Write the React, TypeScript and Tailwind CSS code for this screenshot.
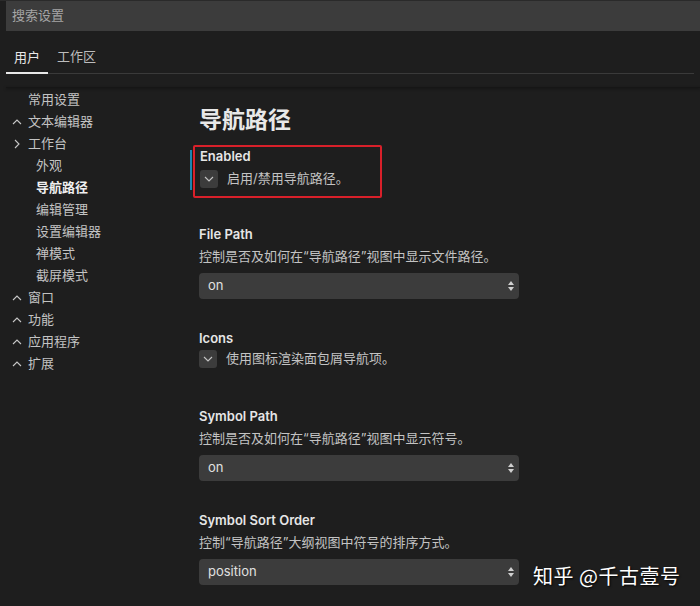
const font = { fontFamily: '"Inter", "Noto Sans CJK SC", sans-serif' }

const sidebar = [
  { label: '常用设置', indent: 'pl-[28px]' },
  { label: '文本编辑器', chevron: 'up' },
  { label: '工作台', chevron: 'right' },
  { label: '外观', indent: 'pl-[36px]' },
  { label: '导航路径', indent: 'pl-[36px]', active: true },
  { label: '编辑管理', indent: 'pl-[36px]' },
  { label: '设置编辑器', indent: 'pl-[36px]' },
  { label: '禅模式', indent: 'pl-[36px]' },
  { label: '截屏模式', indent: 'pl-[36px]' },
  { label: '窗口', chevron: 'up' },
  { label: '功能', chevron: 'up' },
  { label: '应用程序', chevron: 'up' },
  { label: '扩展', chevron: 'up' },
]

function Chevron({ dir }: { dir: string }) {
  return (
    <svg width="10" height="10" viewBox="0 0 10 10" className="ml-[2px] mr-[6px] shrink-0">
      {dir === 'up' ? (
        <path d="M1 7 L5 3 L9 7" fill="none" stroke="#c8c8c8" strokeWidth="1.1" />
      ) : (
        <path d="M3 1 L7 5 L3 9" fill="none" stroke="#c8c8c8" strokeWidth="1.1" />
      )}
    </svg>
  )
}

function Checkbox() {
  return (
    <div className="w-[18px] h-[18px] rounded-[3px] bg-[#3c3c3c] flex items-center justify-center shrink-0">
      <svg width="10" height="6" viewBox="0 0 10 6">
        <path d="M1 1 L5 5 L9 1" fill="none" stroke="#c5c5c5" strokeWidth="1.1" />
      </svg>
    </div>
  )
}

function Select({ value }: { value: string }) {
  return (
    <div className="w-[320px] h-[26px] rounded-[4px] bg-[#3c3c3c] flex items-center justify-between pl-[9px] pr-[4px] text-[13px] text-[#e0e0e0]">
      <span>{value}</span>
      <svg width="8" height="14" viewBox="0 0 8 14">
        <path d="M4 2 L7 6 L1 6 Z" fill="#d0d0d0" />
        <path d="M4 12 L7 8 L1 8 Z" fill="#d0d0d0" />
      </svg>
    </div>
  )
}

function Setting({ title, desc, value, mt }: { title: string; desc: string; value: string; mt: string }) {
  return (
    <div className={mt}>
      <div className="text-[13px] font-semibold text-[#e6e6e6] leading-[18px]">{title}</div>
      <div className="mt-[2px] text-[13px] text-[#c3c3c3] leading-[22px] mb-[6px]">{desc}</div>
      <Select value={value} />
    </div>
  )
}

export default function App() {
  return (
    <div className="w-[700px] h-[606px] bg-[#1e1e1e] overflow-hidden relative" style={font}>
      <div className="h-px bg-[#2a2a2a]" />
      {/* search */}
      <div className="ml-[6px] h-[30px] bg-[#3c3c3c] flex items-center pl-[6px] text-[13px] text-[#a5a5a5]">
        搜索设置
      </div>

      {/* tabs */}
      <div className="mx-[6px] h-[43px] border-b border-[#3a3a3a] flex items-end text-[13px]">
        <div className="w-[42px] h-[26px] pl-[8px] text-[#e8e8e8] border-b-2 border-[#e8e8e8] -mb-px">用户</div>
        <div className="pl-[9px] h-[26px] text-[#bdbdbd]">工作区</div>
      </div>

      <div className="mt-[13px] ml-[6px] h-px bg-[#161616] shadow-[0_1px_3px_rgba(0,0,0,0.6)]" />

      <div className="flex">
        {/* sidebar */}
        <div className="w-[190px] pt-[1px] flex flex-col text-[13px] text-[#c3c3c3]">
          {sidebar.map((it) => (
            <div
              key={it.label}
              className={`h-[22px] flex items-center ${it.indent ?? 'pl-[10px]'} ${it.active ? 'font-bold text-[#f0f0f0]' : ''}`}
            >
              {it.chevron && <Chevron dir={it.chevron} />}
              {it.label}
            </div>
          ))}
        </div>

        {/* main */}
        <div className="flex-1 pl-[9px] pt-[17px]">
          <h1 className="text-[23px] font-semibold text-[#e8e8e8] leading-[30px]">导航路径</h1>

          <div className="mt-[10px] -ml-[6px] w-[189px] h-[53px] border-2 border-[#d9202a] rounded-[2px] flex">
            <div className="ml-[-5px] mt-[3px] h-[40px] w-[2px] bg-[#1a85b0] mr-[8px]" />
            <div className="flex flex-col">
              <div className="text-[13px] font-semibold text-[#e6e6e6] leading-[18px]">Enabled</div>
              <div className="flex items-center mt-[4px] text-[13px] text-[#c3c3c3]">
                <Checkbox />
                <span className="ml-[9px]">启用/禁用导航路径。</span>
              </div>
            </div>
          </div>

          <Setting mt="mt-[27px]" title="File Path" desc="控制是否及如何在“导航路径”视图中显示文件路径。" value="on" />

          <div className="mt-[30px]">
            <div className="text-[13px] font-semibold text-[#e6e6e6] leading-[18px]">Icons</div>
            <div className="flex items-center mt-[2px] text-[13px] text-[#c3c3c3]">
              <Checkbox />
              <span className="ml-[9px]">使用图标渲染面包屑导航项。</span>
            </div>
          </div>

          <Setting mt="mt-[38px]" title="Symbol Path" desc="控制是否及如何在“导航路径”视图中显示符号。" value="on" />
          <Setting mt="mt-[30px]" title="Symbol Sort Order" desc="控制“导航路径”大纲视图中符号的排序方式。" value="position" />
        </div>
      </div>

      <div
        className="absolute left-[533px] top-[561px] text-[20px] text-white tracking-[0.5px] [text-shadow:1px_1px_2px_rgba(0,0,0,0.9)]"
        style={{ fontFamily: '"Noto Sans CJK SC", sans-serif' }}
      >
        知乎 @千古壹号
      </div>
    </div>
  )
}
